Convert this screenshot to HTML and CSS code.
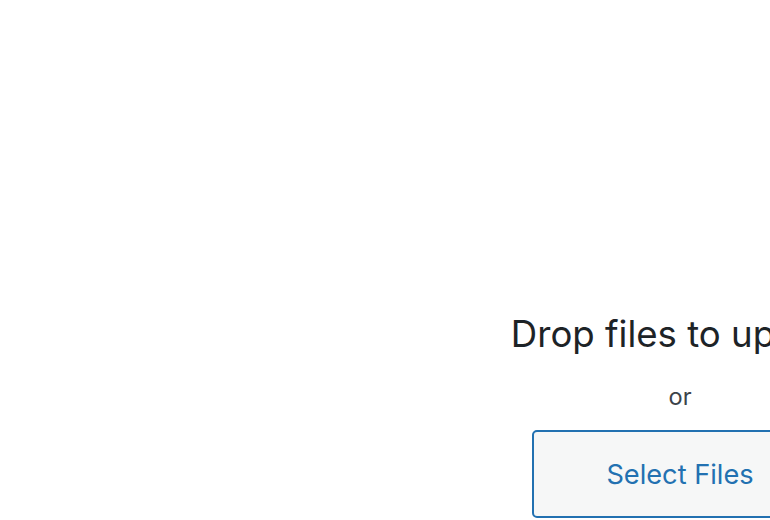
FILE: index.html
```html
<!DOCTYPE html>
<html lang="en">
<head>
<meta charset="utf-8">
<title>Upload</title>
<link rel="stylesheet" href="styles.css">
</head>
<body>
<div class="upload-ui">
  <h2 class="upload-instructions">Drop files to upload</h2>
  <p class="upload-or">or</p>
  <button type="button" class="browser-button">Select Files</button>
</div>
</body>
</html>
```
FILE: styles.css
```css
html, body {
  margin: 0;
  padding: 0;
  background: #ffffff;
  overflow: hidden;
  width: 770px;
  height: 520px;
}

body {
  font-family: "Inter", "Noto Sans", "Liberation Sans", sans-serif;
  color: #1d2327;
}

.upload-ui {
  width: 400px;
  margin-left: 480px;
  padding-top: 313px;
  display: flex;
  flex-direction: column;
  align-items: center;
}

.upload-instructions {
  margin: 0;
  font-size: 36.6px;
  font-weight: 400;
  line-height: 43px;
  white-space: nowrap;
  color: #1d2327;
}

.upload-or {
  margin: 27px 0 0;
  font-size: 23.6px;
  line-height: 28px;
  color: #3c434a;
}

.browser-button {
  margin-top: 19px;
  box-sizing: border-box;
  width: 296px;
  height: 88px;
  flex-shrink: 0;
  border: 2px solid #2271b1;
  border-radius: 5px;
  background: #f6f7f7;
  color: #2271b1;
  font-family: inherit;
  font-size: 27.2px;
  display: flex;
  align-items: center;
  justify-content: center;
  padding: 0;
  cursor: pointer;
}
```
